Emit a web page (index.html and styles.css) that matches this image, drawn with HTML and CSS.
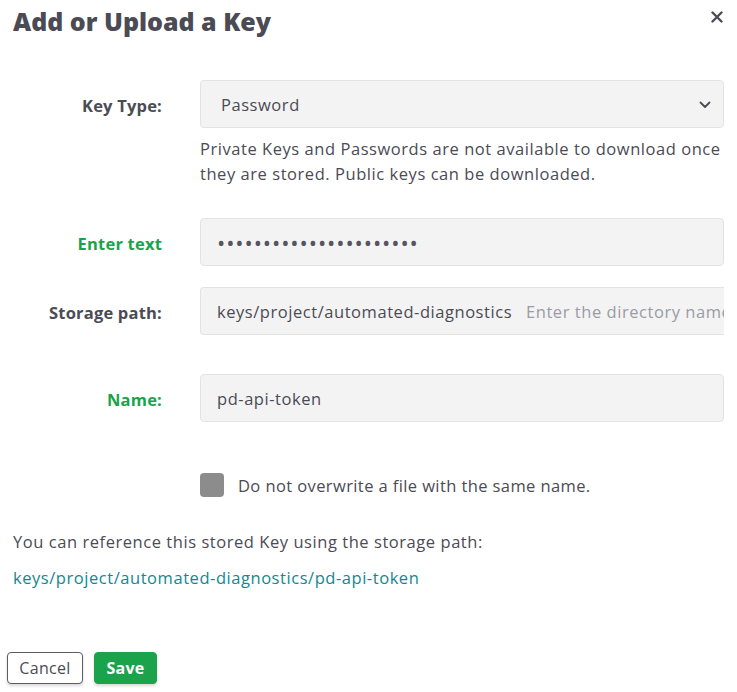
FILE: index.html
```html
<!DOCTYPE html>
<html lang="en">
<head>
<meta charset="utf-8">
<title>Add or Upload a Key</title>
<link rel="stylesheet" href="styles.css">
</head>
<body>
<div class="modal">
  <header class="modal-header">
    <h1 class="modal-title">Add or Upload a Key</h1>
    <button class="close-btn" aria-label="Close">
      <svg width="12" height="12" viewBox="0 0 12 12"><path d="M1.5 1.5 L10.5 10.5 M10.5 1.5 L1.5 10.5" stroke="#4b4b55" stroke-width="2.4" stroke-linecap="round"/></svg>
    </button>
  </header>

  <div class="form">
    <div class="row row-type">
      <label class="label">Key Type:</label>
      <div class="field">
        <div class="select">
          <span>Password</span>
          <svg class="chev" width="12" height="8" viewBox="0 0 12 8"><path d="M1.5 1.5 L6 6 L10.5 1.5" fill="none" stroke="#4b4b55" stroke-width="1.8" stroke-linecap="round" stroke-linejoin="round"/></svg>
        </div>
        <p class="help">Private Keys and Passwords are not available to download once they are stored. Public keys can be downloaded.</p>
      </div>
    </div>

    <div class="row row-text">
      <label class="label label-green">Enter text</label>
      <div class="field">
        <div class="input dots">••••••••••••••••••••••</div>
      </div>
    </div>

    <div class="row row-path">
      <label class="label">Storage path:</label>
      <div class="field">
        <div class="input input-path">
          <span class="prefix">keys/project/automated-diagnostics</span>
          <span class="placeholder">Enter the directory name</span>
        </div>
      </div>
    </div>

    <div class="row row-name">
      <label class="label label-green">Name:</label>
      <div class="field">
        <div class="input">pd-api-token</div>
      </div>
    </div>

    <div class="row row-check">
      <div></div>
      <div class="field check">
        <span class="box"></span>
        <span class="check-text">Do not overwrite a file with the same name.</span>
      </div>
    </div>
  </div>

  <p class="ref-text">You can reference this stored Key using the storage path:</p>
  <a class="ref-link" href="#">keys/project/automated-diagnostics/pd-api-token</a>

  <footer class="footer">
    <button class="btn btn-cancel">Cancel</button>
    <button class="btn btn-save">Save</button>
  </footer>
</div>
</body>
</html>
```

FILE: styles.css
```css
* { box-sizing: border-box; }

html, body {
  margin: 0;
  padding: 0;
  background: #ffffff;
}

body {
  font-family: "Open Sans", "Liberation Sans", sans-serif;
  color: #4b4b55;
  font-size: 16.5px;
  letter-spacing: 0.55px;
}

.modal {
  width: 737px;
  height: 692px;
  padding: 0 13px;
  overflow: hidden;
}

.modal-header {
  display: flex;
  justify-content: space-between;
  align-items: flex-start;
  padding-top: 3px;
}

.modal-title {
  margin: 0;
  font-size: 25px;
  line-height: 37px;
  font-weight: 800;
  letter-spacing: 0;
  color: #4b4b55;
}

.close-btn {
  border: 0;
  background: none;
  padding: 0;
  margin: 7px 0 0 0;
  width: 14px;
  height: 14px;
  display: flex;
  align-items: center;
  justify-content: center;
}

.form {
  margin-top: 40px;
  display: flex;
  flex-direction: column;
}

.row {
  display: grid;
  grid-template-columns: 149px minmax(0, 1fr);
  column-gap: 38px;
  align-items: start;
}

.field { min-width: 0; }

.label {
  text-align: right;
  font-weight: 700;
  font-size: 16.5px;
  height: 48px;
  line-height: 45px;
  padding-top: 3px;
  letter-spacing: 0.2px;
  color: #4b4b55;
}

.label-green { color: #1ba34c; }

.select, .input {
  height: 48px;
  background: #f3f3f3;
  border: 1px solid #e3e3e3;
  border-radius: 4px;
  padding: 1px 16px 0;
  display: flex;
  align-items: center;
  font-size: 16.5px;
  color: #4b4b55;
  white-space: nowrap;
}

.select { justify-content: space-between; padding-right: 12px; padding-left: 20px; }

.help {
  margin: 8px 0 0;
  line-height: 25px;
  font-size: 16.5px;
  color: #4b4b55;
}

.row-text { margin-top: 32px; }
.row-path { margin-top: 21px; }
.row-name { margin-top: 39px; }
.row-check { margin-top: 51px; }

.dots {
  font-size: 22px;
  letter-spacing: 0.9px;
  color: #55555f;
  padding-top: 0;
}

.input-path {
  overflow: hidden;
  border-right: 0;
  border-top-right-radius: 0;
  border-bottom-right-radius: 0;
  gap: 14px;
}

.placeholder { color: #9b9ba4; }

.check {
  display: flex;
  align-items: center;
  gap: 14px;
  height: 24px;
}

.box {
  width: 24px;
  height: 24px;
  background: #8c8c8c;
  border-radius: 4px;
  flex: none;
}

.check-text { line-height: 24px; padding-top: 2px; letter-spacing: 0.4px; }

.ref-text {
  margin: 32px 0 0;
  line-height: 25px;
  color: #4b4b55;
}

.ref-link {
  display: block;
  margin-top: 11px;
  line-height: 25px;
  color: #12878f;
  text-decoration: none;
}

.footer {
  margin: 62px 0 0 -6px;
  display: flex;
  gap: 11px;
}

.btn {
  height: 32px;
  border-radius: 4px;
  font-family: inherit;
  font-size: 16px;
  letter-spacing: 0.3px;
  padding: 0;
  cursor: pointer;
}

.btn-cancel {
  width: 76px;
  background: #fff;
  border: 1px solid #5c5c64;
  color: #4b4b55;
  box-shadow: 0 2px 3px rgba(0,0,0,0.15);
}

.btn-save {
  width: 63px;
  background: #1ba34c;
  border: 1px solid #1ba34c;
  color: #fff;
  font-weight: 700;
  box-shadow: 0 2px 3px rgba(0,0,0,0.15);
}
```
